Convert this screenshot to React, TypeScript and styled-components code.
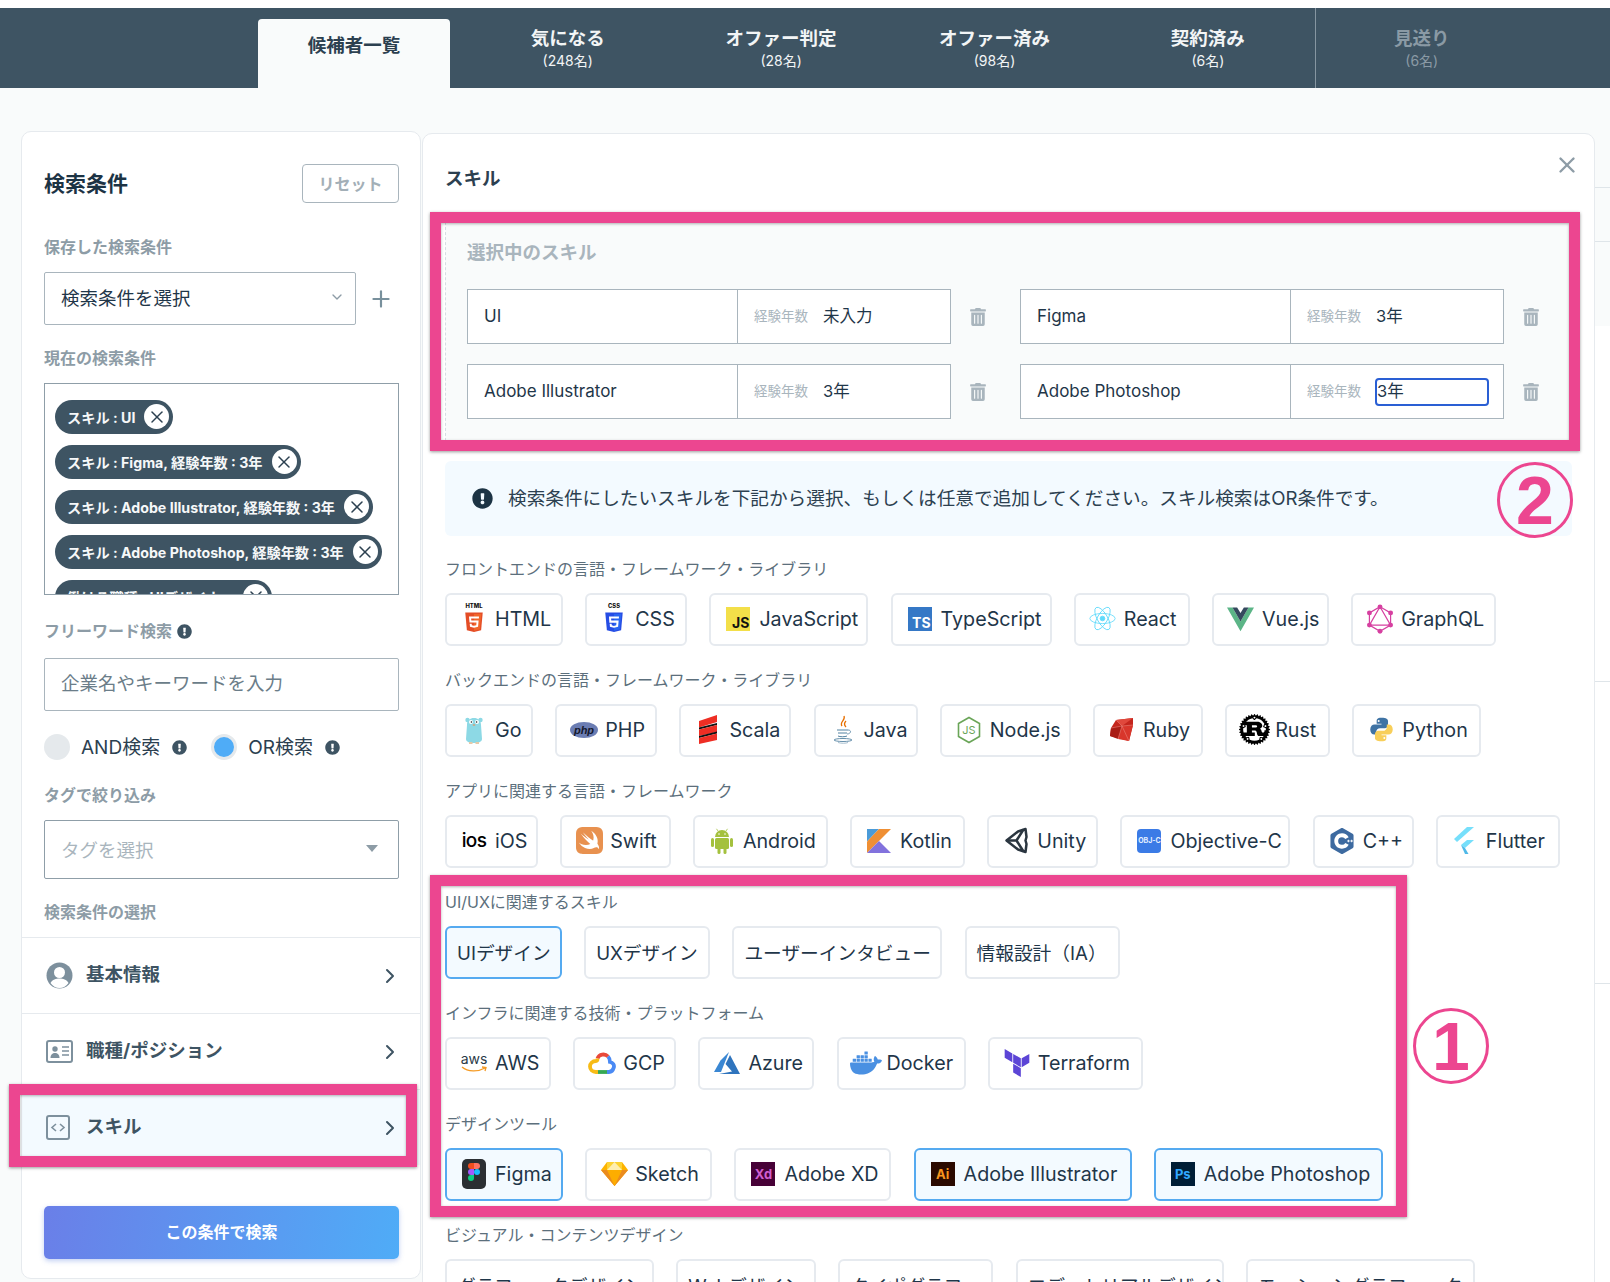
import * as React from 'react';
import styled, { createGlobalStyle } from 'styled-components';
import { ChevronDown, ChevronRight, Plus, X } from 'lucide-react';
import { FaExclamationCircle, FaTrashAlt } from 'react-icons/fa';
import { SiCplusplus, SiDocker, SiRust, SiSwift, SiTerraform } from 'react-icons/si';

const GlobalStyle = createGlobalStyle`
  html, body {
    margin: 0;
    padding: 0;
    background: #f9fbfb;
  }
  * {
    box-sizing: border-box;
  }
  body {
    font-family: Inter, 'Noto Sans CJK JP', sans-serif;
    color: #1f3649;
  }
`;

const Page = styled.div`
  position: relative;
  width: 1610px;
  height: 1282px;
  overflow: hidden;
  padding-top: 8px;
  background: linear-gradient(#fff 8px, #f9fbfb 8px);
`;

const Nav = styled.nav`
  display: flex;
  height: 80px;
  padding-left: 247px;
  background: #3e5463;
`;

const Tab = styled.div<{ $off?: boolean }>`
  width: 213.4px;
  display: flex;
  flex-direction: column;
  align-items: center;
  padding-top: 17px;
  color: ${p => (p.$off ? '#8a9aa5' : '#f2f5f6')};
  ${p => p.$off && 'border-left: 1px solid #8696a1;'}
`;

const ActiveTab = styled.div`
  width: 192px;
  margin: 11px 11px 0;
  display: flex;
  justify-content: center;
  padding-top: 12px;
  font-size: 18.5px;
  font-weight: 700;
  color: #2c4050;
  background: #f9fbfb;
  border-radius: 4px 4px 0 0;
`;

const TabName = styled.div`
  font-size: 18.5px;
  line-height: 26px;
  font-weight: 700;
`;

const TabCount = styled.div`
  font-size: 14px;
  line-height: 18px;
  margin-top: 1px;
`;

const Main = styled.div`
  display: flex;
  align-items: flex-start;
  padding: 43px 0 0 21px;
`;

const SideCard = styled.aside`
  width: 400px;
  height: 1148px;
  padding-top: 32px;
  background: #fff;
  border: 1px solid #e6eaee;
  border-radius: 10px;
`;

const Inset = styled.div`
  padding: 0 21px 0 22px;
`;

const SideHead = styled.div`
  display: flex;
  justify-content: space-between;
  align-items: center;
  height: 39px;
`;

const SideTitle = styled.h2`
  margin: 0 0 4px;
  font-size: 21px;
  font-weight: 700;
  color: #1c3344;
`;

const ResetButton = styled.button`
  width: 97px;
  height: 39px;
  padding: 0 0 2px;
  background: #fff;
  border: 1px solid #a9b5bd;
  border-radius: 4px;
  font: 700 16px Inter, 'Noto Sans CJK JP', sans-serif;
  color: #a3afb7;
`;

const FieldLabel = styled.div<{ $top: number; $bottom?: number }>`
  display: flex;
  align-items: center;
  gap: 5px;
  margin-top: ${p => p.$top - 1}px;
  margin-bottom: ${p => (p.$bottom ?? 12) + 1}px;
  font-size: 16px;
  line-height: 24px;
  font-weight: 700;
  color: #8d9ca6;
`;

const SelectRow = styled.div`
  display: flex;
  align-items: center;
  justify-content: space-between;
  color: #78909c;
`;

const SelectBox = styled.div`
  flex: 0 0 312px;
  height: 53px;
  display: flex;
  align-items: center;
  justify-content: space-between;
  padding: 0 10px 3px 16px;
  font-size: 18.5px;
  color: #1f3649;
  background: #fff;
  border: 1px solid #a9b5bd;
  border-radius: 2px;
`;

const AddIcon = styled(Plus)`
  margin-right: 5px;
`;

const ChipsBox = styled.div`
  height: 212px;
  overflow: hidden;
  padding: 16px 10px;
  display: flex;
  flex-direction: column;
  align-items: flex-start;
  gap: 11.5px;
  background: #fff;
  border: 1px solid #8f9ea8;
`;

const FilterChip = styled.div`
  flex: none;
  height: 33.5px;
  display: flex;
  align-items: center;
  gap: 9px;
  padding: 0 4px 0 12px;
  font-size: 14.2px;
  font-weight: 700;
  white-space: nowrap;
  color: #f6f8f9;
  background: #3e5463;
  border-radius: 17px;
`;

const ChipClose = styled.span`
  width: 25px;
  height: 25px;
  display: flex;
  align-items: center;
  justify-content: center;
  color: #2c4050;
  background: #fff;
  border-radius: 50%;
`;

const KeywordInput = styled.input`
  display: block;
  width: 100%;
  height: 53px;
  padding: 0 16px 3px;
  font: 18.5px Inter, 'Noto Sans CJK JP', sans-serif;
  background: #fff;
  border: 1px solid #a9b5bd;
  border-radius: 2px;
  outline: none;
  &::placeholder {
    color: #6b7d89;
  }
`;

const RadioRow = styled.div`
  display: flex;
  align-items: center;
  height: 26px;
  margin-top: 23px;
  font-size: 19px;
  color: #2c4050;
`;

const RadioText = styled.span`
  padding-bottom: 3px;
`;

const Radio = styled.span<{ $on?: boolean }>`
  width: 26px;
  height: 26px;
  margin-left: ${p => (p.$on ? 24 : 0)}px;
  margin-right: ${p => (p.$on ? 11 : 11)}px;
  border-radius: 50%;
  background: ${p => (p.$on ? '#4facf7' : '#e5e9ec')};
  ${p => p.$on && 'border: 3px solid #e5e9ec;'}
`;

const InfoDot = styled(FaExclamationCircle)<{ $gap?: number }>`
  flex: none;
  margin-left: ${p => p.$gap ?? 12}px;
  color: #3e5463;
`;

const TagSelect = styled.div`
  height: 59px;
  display: flex;
  align-items: center;
  justify-content: space-between;
  padding: 0 20px 2px 16px;
  font-size: 18.5px;
  color: #a9b5bd;
  background: #fff;
  border: 1px solid #8f9ea8;
  border-radius: 2px;
`;

const Caret = styled.span`
  width: 0;
  height: 0;
  border-left: 6px solid transparent;
  border-right: 6px solid transparent;
  border-top: 7px solid #8d9ca6;
`;

const MenuItem = styled.div<{ $on?: boolean; $h: number }>`
  height: ${p => p.$h}px;
  display: flex;
  align-items: center;
  padding: 0 18px 0 24px;
  font-size: 18.5px;
  font-weight: 700;
  color: #3e5463;
  background: ${p => (p.$on ? '#f3faff' : '#fff')};
  border-top: 1px solid #e6eaee;
`;

const MenuLabel = styled.span<{ $gap?: number }>`
  flex: 1;
  margin-left: ${p => p.$gap ?? 13}px;
  padding-bottom: 5px;
`;

const SearchButton = styled.button`
  display: block;
  width: 100%;
  height: 53px;
  margin-top: 41px;
  padding: 0 0 3px;
  background: linear-gradient(100deg, #6a7fe8, #4facf7);
  border: none;
  border-radius: 5px;
  box-shadow: 0 2px 5px rgba(79, 120, 220, 0.35);
  font: 700 16px Inter, 'Noto Sans CJK JP', sans-serif;
  color: #fff;
`;

const ContentCard = styled.section`
  flex: none;
  width: 1173px;
  height: 1160px;
  margin: 2px 0 0 1px;
  padding: 23px 22px 0;
  background: #fff;
  border: 1px solid #e6eaee;
  border-radius: 10px 10px 0 0;
`;

const ContentHead = styled.div`
  display: flex;
  justify-content: space-between;
  height: 65px;
`;

const ContentTitle = styled.h3`
  margin: 7px 0 0;
  font-size: 18.5px;
  line-height: 28px;
  font-weight: 700;
  color: #2c4050;
`;

const CloseIcon = styled(X)`
  margin: -5px -8px 0 0;
  color: #8d9ca6;
`;

const SelectedPanel = styled.div`
  height: 224px;
  width: 1127px;
  padding: 16px 0 0 21px;
  background: #f9fbfb;
  border: 1px dashed #d6dde2;
`;

const PanelTitle = styled.div`
  font-size: 18.5px;
  line-height: 26px;
  font-weight: 700;
  color: #a9b5bd;
  margin-bottom: 24px;
`;

const SelectedGrid = styled.div`
  display: grid;
  grid-template-columns: 538px 538px;
  column-gap: 15px;
  row-gap: 20px;
`;

const SelectedItem = styled.div`
  display: flex;
  align-items: center;
`;

const SkillGroup = styled.div`
  flex: 0 0 484px;
  height: 55px;
  display: flex;
  background: #fff;
  border: 1px solid #a9b5bd;
`;

const SkillName = styled.div`
  flex: 0 0 270px;
  display: flex;
  align-items: center;
  padding: 0 0 2px 16px;
  font-size: 17px;
  color: #1f3649;
  border-right: 1px solid #a9b5bd;
`;

const SkillYears = styled.div`
  flex: 1;
  display: flex;
  align-items: center;
  padding: 0 0 3px 16px;
  font-size: 16.5px;
  color: #1f3649;
`;

const YearsLabel = styled.span`
  width: 69px;
  font-size: 13.5px;
  color: #a9b5bd;
`;

const FocusBox = styled.div`
  width: 114px;
  height: 28px;
  line-height: 22px;
  margin: 3px 0 0 -1px;
  border: 2px solid #2a5fd4;
  border-radius: 4px;
`;

const TrashSlot = styled.div`
  flex: 0 0 54px;
  display: flex;
  justify-content: center;
  color: #a9b5bd;
`;

const Notice = styled.div`
  height: 75px;
  width: 1127px;
  margin-top: 15px;
  display: flex;
  align-items: center;
  gap: 15px;
  padding-left: 27px;
  font-size: 18.65px;
  color: #2c4050;
  background: #f3faff;
  border-radius: 6px;
`;

const NoticeText = styled.span`
  padding-bottom: 4px;
`;

const NoticeIcon = styled(FaExclamationCircle)`
  flex: none;
  color: #1c3344;
`;

const SkillSections = styled.div`
  margin-top: 21px;
`;

const SkillSection = styled.div`
  height: 111px;
`;

const SectionLabel = styled.div`
  font-size: 16px;
  line-height: 24px;
  color: #5c6f7c;
  margin-bottom: 12px;
  white-space: nowrap;
`;

const ChipRow = styled.div`
  display: flex;
  gap: 22.2px;
`;

const SkillChip = styled.div<{ $w: number; $on?: boolean; $plain?: boolean }>`
  flex: none;
  width: ${p => p.$w}px;
  height: 53px;
  display: flex;
  align-items: center;
  gap: 7px;
  padding: 0 0 2px ${p => (p.$plain ? 10 : 13)}px;
  font-size: ${p => (p.$plain ? 18.7 : 19.7)}px;
  white-space: nowrap;
  color: #1f3649;
  background: ${p => (p.$on ? '#f3faff' : '#fff')};
  border: 2px solid ${p => (p.$on ? '#55aaf0' : '#e6eaef')};
  border-radius: 6px;
`;

const IconSlot = styled.span`
  flex: 0 0 28px;
  min-width: 0;
  height: 32px;
  display: flex;
  align-items: center;
  justify-content: center;
  & > * {
    flex: none;
  }
`;

const Tile = styled.span<{ $bg: string; $fg: string; $size?: number; $end?: boolean; $round?: number }>`
  width: 24px;
  height: 24px;
  display: flex;
  align-items: ${p => (p.$end ? 'flex-end' : 'center')};
  justify-content: ${p => (p.$end ? 'flex-end' : 'center')};
  padding: ${p => (p.$end ? '0 1px 0 0' : '0')};
  font-size: ${p => p.$size ?? 13}px;
  line-height: ${p => (p.$end ? '16px' : '24px')};
  font-weight: 700;
  white-space: nowrap;
  color: ${p => p.$fg};
  background: ${p => p.$bg};
  border-radius: ${p => p.$round ?? 0}px;
`;

const LogoWord = styled.span`
  font-size: 19px;
  font-weight: 500;
  color: #000;
  letter-spacing: -0.6px;
`;

const AwsLogo = styled.span`
  display: flex;
  flex-direction: column;
  align-items: center;
  font-size: 14px;
  line-height: 14px;
  color: #2b3a48;
`;

const PinkBox = styled.div<{ $x: number; $y: number; $w: number; $h: number }>`
  position: absolute;
  left: ${p => p.$x}px;
  top: ${p => p.$y}px;
  width: ${p => p.$w}px;
  height: ${p => p.$h}px;
  border: 11px solid #ec4690;
  box-shadow: 0 1px 3px rgba(0, 0, 0, 0.4), inset 0 1px 3px rgba(0, 0, 0, 0.3);
  pointer-events: none;
`;

const StepMark = styled.div<{ $x: number; $y: number }>`
  position: absolute;
  left: ${p => p.$x}px;
  top: ${p => p.$y}px;
  width: 76px;
  height: 76px;
  display: flex;
  align-items: center;
  justify-content: center;
  font-family: 'Liberation Sans', sans-serif;
  font-size: 68px;
  font-weight: 700;
  color: #ec4690;
  border: 3px solid #ec4690;
  border-radius: 50%;
`;

const PageEdge = styled.div`
  flex: none;
  width: 15px;
  height: 1150px;
  margin-top: 56px;
  background: linear-gradient(#f9fbfb 139px, #fff 139px);
`;

const EdgeRow = styled.div<{ $h: number }>`
  height: ${p => p.$h}px;
  border-top: 1px solid #dfe5e9;
`;

const HtmlIcon = ({ css }: { css?: boolean }) => (
  <svg width="24" height="32" viewBox="0 0 32 44">
    <text x="16" y="7" textAnchor="middle" fontSize="8" fontWeight="800" fontFamily="Inter" fill="#111">{css ? 'CSS' : 'HTML'}</text>
    <g transform="translate(0 11)">
      <path d="M4 2l2.2 24.500L16 29l9.800-2.500L28 2z" fill={css ? '#264de4' : '#e44d26'} />
      <path d="M16 27l8-2 2-21H16z" fill={css ? '#2965f1' : '#f16529'} />
      {css ? (
        <path d="M9.100 7.700h13.800l-.25 2.700H12l.2 2.800h10.200l-.75 8.400L16 23.200l-5.600-1.500-.35-4h2.700l.2 2 3.050.8 3.050-.8.3-3.600H9.600z" fill="#fff" />
      ) : (
        <path d="M22.900 7.700H9.100l.75 8.200h9.550l-.3 3.700-3.100.8-3-.8-.2-2.200h-2.700l.4 4.300 5.500 1.500 5.600-1.500.75-8.500H12.300l-.25-2.800h10.600z" fill="#fff" />
      )}
    </g>
  </svg>
);

const ReactIcon = () => (
  <svg width="27" height="27" viewBox="0 0 32 32" fill="none" stroke="#61dafb" strokeWidth="1">
    <circle cx="16" cy="16" r="2.800" fill="#61dafb" />
    <ellipse cx="16" cy="16" rx="15" ry="6" />
    <ellipse cx="16" cy="16" rx="15" ry="6" transform="rotate(60 16 16)" />
    <ellipse cx="16" cy="16" rx="15" ry="6" transform="rotate(120 16 16)" />
  </svg>
);

const VueIcon = () => (
  <svg width="27" height="27" viewBox="0 0 32 32">
    <polygon points="0,3 16,31 32,3 25.500,3 16,19.600 6.500,3" fill="#5cb587" />
    <polygon points="6.500,3 16,19.600 25.500,3 20,3 16,9.500 12,3" fill="#35495e" />
  </svg>
);

const GraphqlIcon = () => {
  const pts = [[16, 3], [27.3, 9.5], [27.3, 22.5], [16, 29], [4.7, 22.5], [4.7, 9.5]];
  return (
    <svg width="30" height="32" viewBox="0 0 32 32" fill="none" stroke="#d63fa0" strokeWidth="1.300">
      <polygon points="16,3 27.300,9.500 27.300,22.500 16,29 4.700,22.500 4.700,9.500" />
      <polygon points="16,3 27.300,22.500 4.700,22.500" />
      {pts.map(([x, y]) => <circle key={`${x}-${y}`} cx={x} cy={y} r="2.600" fill="#d63fa0" stroke="none" />)}
    </svg>
  );
};

const GoIcon = () => (
  <svg width="20" height="28" viewBox="0 0 20 28">
    <circle cx="3.500" cy="4" r="2.200" fill="#8dd9e5" />
    <circle cx="16.500" cy="4" r="2.200" fill="#8dd9e5" />
    <path d="M3 9c0-5 3-7 7-7s7 2 7 7l1 14c0 3-4 4-8 4s-8-1-8-4z" fill="#8dd9e5" />
    <circle cx="7" cy="6" r="2" fill="#fff" />
    <circle cx="13" cy="6" r="2" fill="#fff" />
    <circle cx="7.400" cy="6" r="0.800" fill="#222" />
    <circle cx="12.600" cy="6" r="0.800" fill="#222" />
    <ellipse cx="10" cy="9" rx="1.400" ry="1" fill="#c9a88a" />
    <rect x="5" y="26" width="3.500" height="2" fill="#e6c9a8" />
    <rect x="11.500" y="26" width="3.500" height="2" fill="#e6c9a8" />
  </svg>
);

const PhpIcon = () => (
  <svg width="28" height="16" viewBox="0 0 28 16">
    <ellipse cx="14" cy="8" rx="14" ry="8" fill="#6b7db3" />
    <text x="14" y="11.500" textAnchor="middle" fontSize="11" fontStyle="italic" fontWeight="700" fontFamily="Liberation Sans" fill="#14182c">php</text>
  </svg>
);

const ScalaIcon = () => (
  <svg width="18" height="29" viewBox="0 0 18 29">
    <path d="M0 6l18-6v7L0 12.500z" fill="#ee2e24" />
    <path d="M0 12.500L18 8v2L0 14.500z" fill="#111" />
    <path d="M0 14.500L18 10v7L0 21z" fill="#ee2e24" />
    <path d="M0 21l18-4.500v2L0 23z" fill="#111" />
    <path d="M0 23l18-4.500V25L0 29z" fill="#ee2e24" />
  </svg>
);

const JavaIcon = () => (
  <svg width="20" height="29" viewBox="0 0 20 29" fill="none">
    <path d="M11 1c2 4-5 6-2 10M13 6c-2 2-2 4 0 6" stroke="#e76f00" strokeWidth="1.300" />
    <path d="M4 15h11M5 18h9M5 21c2 1 7 1 9 0" stroke="#5382a1" strokeWidth="1" />
    <path d="M15 15c4 0 3 4-1 4" stroke="#5382a1" strokeWidth="0.800" />
    <ellipse cx="10" cy="25" rx="9" ry="1.500" stroke="#5382a1" strokeWidth="0.900" />
    <path d="M5 27.500c3 1 8 1 10 0" stroke="#9db7c9" strokeWidth="0.900" />
  </svg>
);

const NodeIcon = () => (
  <svg width="24" height="28" viewBox="0 0 24 28">
    <polygon points="12,1.500 22.500,7.500 22.500,20.500 12,26.500 1.500,20.500 1.500,7.500" fill="none" stroke="#6aa558" strokeWidth="1.600" />
    <text x="12" y="18" textAnchor="middle" fontSize="11" fontFamily="Inter" fill="#6aa558">JS</text>
  </svg>
);

const RubyIcon = () => (
  <svg width="26" height="26" viewBox="0 0 26 26">
    <polygon points="7,3 24,1 24,8 20,24 1,19 2,11" fill="#c4261d" />
    <polygon points="7,3 13,9 24,1" fill="#e0483c" />
    <polygon points="2,11 13,9 9,22 1,19" fill="#a91c14" />
    <polygon points="13,9 24,8 20,24 9,22" fill="#d8362b" />
    <path d="M7 3l6 6 11-1M2 11l11-2-4 13M13 9l7 15" stroke="#ee8f87" strokeWidth="0.500" fill="none" />
  </svg>
);

const PythonIcon = () => (
  <svg width="27" height="27" viewBox="0 0 24 24">
    <path d="M12 1.500c-4.200 0-4.300 1.800-4.300 3v2.300H12v.7H5.900C3.700 7.500 2 9.200 2 12s1.500 4.500 3.600 4.500h1.700v-2.400c0-1.800 1.500-3.300 3.400-3.300h4.200c1.600 0 2.900-1.300 2.900-2.900V4.500c0-1.600-1.400-3-5.800-3z" fill="#3f73a4" />
    <path d="M12 22.500c4.200 0 4.300-1.800 4.300-3v-2.300H12v-.7h6.100c2.200 0 3.900-1.700 3.900-4.500s-1.500-4.500-3.600-4.500h-1.700v2.400c0 1.800-1.500 3.300-3.400 3.300H9.100c-1.600 0-2.900 1.300-2.900 2.900v3.400c0 1.600 1.400 3 5.800 3z" fill="#f8cf5a" />
    <circle cx="9.500" cy="4.400" r="0.900" fill="#fff" />
    <circle cx="14.500" cy="19.600" r="0.900" fill="#fff" />
  </svg>
);

const AndroidIcon = () => (
  <svg width="22" height="26" viewBox="0 0 22 26" fill="#a4c13e">
    <path d="M4 9a7 7 0 0 1 14 0z" />
    <rect x="4" y="10" width="14" height="11" rx="1.500" />
    <rect x="0" y="10" width="3" height="9" rx="1.500" />
    <rect x="19" y="10" width="3" height="9" rx="1.500" />
    <rect x="6.500" y="19" width="3" height="7" rx="1.500" />
    <rect x="12.500" y="19" width="3" height="7" rx="1.500" />
    <path d="M7 3L5.500 .8M15 3l1.500-2.200" stroke="#a4c13e" strokeWidth="0.800" />
    <circle cx="8" cy="6" r="0.800" fill="#fff" />
    <circle cx="14" cy="6" r="0.800" fill="#fff" />
  </svg>
);

const KotlinIcon = () => (
  <svg width="24" height="24" viewBox="0 0 24 24">
    <polygon points="0,0 12,0 0,12.500" fill="#4b9bd8" />
    <polygon points="12,0 24,0 0,24 0,12.500" fill="#ef8f34" />
    <polygon points="0,24 12,12 24,24" fill="#8272dd" />
  </svg>
);

const UnityIcon = () => (
  <svg width="24" height="27" viewBox="0 0 24 27" fill="none" stroke="#2b3640" strokeWidth="2.500" strokeLinejoin="round">
    <path d="M2.500 13.500L14 4.500l7.500-2.500 1 8-1 3.500 1 3.500-1 8-7.500-2.500z" />
    <path d="M2.500 13.500h10l7-11M12.500 13.500l7 11M12.500 13.500" />
  </svg>
);

const FlutterIcon = () => (
  <svg width="22" height="27" viewBox="0 0 22 27">
    <polygon points="13,0 20,0 3,15 0,12" fill="#76dffb" />
    <polygon points="13,13 20,13 11,21 7,18" fill="#76dffb" />
    <polygon points="7,18 11,21 14.500,27 11,27" fill="#4fb9e8" />
  </svg>
);

const GcpIcon = () => (
  <svg width="28" height="26" viewBox="0 0 28 26" fill="none" strokeWidth="3.800">
    <path d="M9.500 8.500C11 4 17 3.300 20 6.500" stroke="#e9493a" />
    <path d="M20 6.500c2 2 2 3.500 2 5.500 3 .5 4.500 3 3.800 5.500S23 22 21 22h-2" stroke="#4a8af4" />
    <path d="M19 22h-9" stroke="#35a853" />
    <path d="M10 22H8c-3.500 0-6-2.500-6-5.500s2.500-5.500 6-5.500c1 0 1.500 0 1.500-2.500" stroke="#f7bb16" />
  </svg>
);

const AzureIcon = () => (
  <svg width="26" height="24" viewBox="0 0 26 24">
    <polygon points="15,1 6.500,9.500 0,21 7,21" fill="#3a87d3" />
    <polygon points="16,4 26,23 5,23 18,20.500 11.500,13" fill="#2f74bd" />
  </svg>
);

const FigmaIcon = () => (
  <svg width="24" height="30" viewBox="0 0 24 30">
    <rect width="24" height="30" rx="5" fill="#2b2f33" />
    <path d="M12 4h-3a3 3 0 0 0 0 6h3z" fill="#f24e1e" />
    <path d="M12 4h3a3 3 0 0 1 0 6h-3z" fill="#ff7262" />
    <path d="M12 10H9a3 3 0 0 0 0 6h3z" fill="#a259ff" />
    <circle cx="15" cy="13" r="3" fill="#1abcfe" />
    <path d="M9 16h3v3a3 3 0 1 1-3-3z" fill="#0acf83" />
  </svg>
);

const SketchIcon = () => (
  <svg width="27" height="25" viewBox="0 0 27 25">
    <polygon points="6,1 21,1 27,9 13.500,25 0,9" fill="#fdb300" />
    <polygon points="0,9 27,9 13.500,25" fill="#ea8b1f" />
    <polygon points="6,9 21,9 13.500,25" fill="#fdad00" />
    <polygon points="6,1 13.500,1 21,1 21,9 6,9" fill="#fdd231" />
    <polygon points="13.500,1 21,9 6,9" fill="#feeeb0" />
  </svg>
);

const AwsIcon = () => (
  <AwsLogo>
    aws
    <svg width="27" height="7" viewBox="0 0 27 7" fill="none">
      <path d="M1 1c6 5 16 5 23 1M21 1l4 .5-1 3.500" stroke="#f59a23" strokeWidth="1.300" />
    </svg>
  </AwsLogo>
);

type Skill = { name: string; w: number; icon?: React.ReactNode; on?: boolean };

const sections: { label: string; chips: Skill[] }[] = [
  {
    label: 'フロントエンドの言語・フレームワーク・ライブラリ',
    chips: [
      { name: 'HTML', w: 118, icon: <HtmlIcon /> },
      { name: 'CSS', w: 102, icon: <HtmlIcon css /> },
      { name: 'JavaScript', w: 159, icon: <Tile $bg="#f3df49" $fg="#111" $size={14} $end>JS</Tile> },
      { name: 'TypeScript', w: 161, icon: <Tile $bg="#3578c6" $fg="#fff" $size={14} $end>TS</Tile> },
      { name: 'React', w: 116, icon: <ReactIcon /> },
      { name: 'Vue.js', w: 117, icon: <VueIcon /> },
      { name: 'GraphQL', w: 145, icon: <GraphqlIcon /> },
    ],
  },
  {
    label: 'バックエンドの言語・フレームワーク・ライブラリ',
    chips: [
      { name: 'Go', w: 88, icon: <GoIcon /> },
      { name: 'PHP', w: 102, icon: <PhpIcon /> },
      { name: 'Scala', w: 112, icon: <ScalaIcon /> },
      { name: 'Java', w: 104, icon: <JavaIcon /> },
      { name: 'Node.js', w: 131, icon: <NodeIcon /> },
      { name: 'Ruby', w: 110, icon: <RubyIcon /> },
      { name: 'Rust', w: 105, icon: <SiRust size={31} color="#000" /> },
      { name: 'Python', w: 129, icon: <PythonIcon /> },
    ],
  },
  {
    label: 'アプリに関連する言語・フレームワーク',
    chips: [
      { name: 'iOS', w: 93, icon: <LogoWord>ios</LogoWord> },
      { name: 'Swift', w: 110.5, icon: <SiSwift size={27} color="#e8914f" /> },
      { name: 'Android', w: 135, icon: <AndroidIcon /> },
      { name: 'Kotlin', w: 115, icon: <KotlinIcon /> },
      { name: 'Unity', w: 111, icon: <UnityIcon /> },
      { name: 'Objective-C', w: 170, icon: <Tile $bg="#3b7be6" $fg="#e6f0ff" $size={7} $round={4}>OBJ-C</Tile> },
      { name: 'C++', w: 101, icon: <SiCplusplus size={26} color="#3d6aa0" /> },
      { name: 'Flutter', w: 124, icon: <FlutterIcon /> },
    ],
  },
  {
    label: 'UI/UXに関連するスキル',
    chips: [
      { name: 'UIデザイン', w: 117, on: true },
      { name: 'UXデザイン', w: 126 },
      { name: 'ユーザーインタビュー', w: 210 },
      { name: '情報設計（IA）', w: 155 },
    ],
  },
  {
    label: 'インフラに関連する技術・プラットフォーム',
    chips: [
      { name: 'AWS', w: 106, icon: <AwsIcon /> },
      { name: 'GCP', w: 103, icon: <GcpIcon /> },
      { name: 'Azure', w: 116, icon: <AzureIcon /> },
      { name: 'Docker', w: 129, icon: <SiDocker size={32} color="#4a90e2" /> },
      { name: 'Terraform', w: 155, icon: <SiTerraform size={28} color="#5c45d6" /> },
    ],
  },
  {
    label: 'デザインツール',
    chips: [
      { name: 'Figma', w: 118, icon: <FigmaIcon />, on: true },
      { name: 'Sketch', w: 127, icon: <SketchIcon /> },
      { name: 'Adobe XD', w: 157, icon: <Tile $bg="#470137" $fg="#d05fd0">Xd</Tile> },
      { name: 'Adobe Illustrator', w: 218, icon: <Tile $bg="#2b0a00" $fg="#f7941d">Ai</Tile>, on: true },
      { name: 'Adobe Photoshop', w: 229, icon: <Tile $bg="#001e36" $fg="#31a8ff">Ps</Tile>, on: true },
    ],
  },
  {
    label: 'ビジュアル・コンテンツデザイン',
    chips: [
      { name: 'グラフィックデザイン', w: 209 },
      { name: 'Webデザイン', w: 140 },
      { name: 'タイポグラフィ', w: 155 },
      { name: 'エディトリアルデザイン', w: 208 },
      { name: 'モーショングラフィック', w: 229 },
    ],
  },
];

const filterChips = [
  'スキル : UI',
  'スキル : Figma, 経験年数 : 3年',
  'スキル : Adobe Illustrator, 経験年数 : 3年',
  'スキル : Adobe Photoshop, 経験年数 : 3年',
  '働ける職種 : UIデザイナー',
];

const tabs = [
  { name: '気になる', count: '(248名)' },
  { name: 'オファー判定', count: '(28名)' },
  { name: 'オファー済み', count: '(98名)' },
  { name: '契約済み', count: '(6名)' },
];

const selected = [
  { name: 'UI', years: '未入力' },
  { name: 'Figma', years: '3年' },
  { name: 'Adobe Illustrator', years: '3年' },
  { name: 'Adobe Photoshop', years: '3年', focus: true },
];

const PersonIcon = () => (
  <svg width="27" height="27" viewBox="0 0 27 27">
    <circle cx="13.500" cy="13.500" r="13" fill="#7d909d" />
    <circle cx="13.500" cy="10.500" r="5.500" fill="#fff" />
    <path d="M4.500 21c2-3.500 5.500-4.500 9-4.500s7 1 9 4.500c-2 3-5.500 5-9 5s-7-2-9-5z" fill="#fff" />
  </svg>
);

const CardIcon = () => (
  <svg width="27" height="23" viewBox="0 0 27 23">
    <rect x="1" y="1" width="25" height="21" rx="2" fill="#fff" stroke="#7d909d" strokeWidth="2" />
    <circle cx="9" cy="9" r="2.700" fill="#7d909d" />
    <path d="M4.500 18c0-3.500 2-5 4.500-5s4.500 1.500 4.500 5z" fill="#7d909d" />
    <path d="M16 7h7M16 11h7M16 15h7" stroke="#7d909d" strokeWidth="1.500" />
  </svg>
);

const CodeIcon = () => (
  <svg width="24" height="25" viewBox="0 0 24 25" fill="none" stroke="#7d909d">
    <rect x="1" y="1" width="22" height="23" rx="2" strokeWidth="2" />
    <path d="M10 9l-4 3.500 4 3.500M14 9l4 3.500-4 3.500" strokeWidth="1.600" />
  </svg>
);

export default function App() {
  return (
    <Page>
      <GlobalStyle />
      <Nav>
        <ActiveTab>候補者一覧</ActiveTab>
        {tabs.map(t => (
          <Tab key={t.name}>
            <TabName>{t.name}</TabName>
            <TabCount>{t.count}</TabCount>
          </Tab>
        ))}
        <Tab $off>
          <TabName>見送り</TabName>
          <TabCount>(6名)</TabCount>
        </Tab>
      </Nav>

      <Main>
        <SideCard>
          <Inset>
            <SideHead>
              <SideTitle>検索条件</SideTitle>
              <ResetButton>リセット</ResetButton>
            </SideHead>

            <FieldLabel $top={33}>保存した検索条件</FieldLabel>
            <SelectRow>
              <SelectBox>
                検索条件を選択
                <ChevronDown size={16} color="#8d9ca6" />
              </SelectBox>
              <AddIcon size={26} strokeWidth={2} />
            </SelectRow>

            <FieldLabel $top={22}>現在の検索条件</FieldLabel>
            <ChipsBox>
              {filterChips.map(c => (
                <FilterChip key={c}>
                  {c}
                  <ChipClose><X size={20} strokeWidth={1.8} /></ChipClose>
                </FilterChip>
              ))}
            </ChipsBox>

            <FieldLabel $top={25} $bottom={14}>
              フリーワード検索
              <InfoDot size={15} $gap={0} />
            </FieldLabel>
            <KeywordInput readOnly placeholder="企業名やキーワードを入力" />

            <RadioRow>
              <Radio />
              <RadioText>AND検索</RadioText>
              <InfoDot size={15} />
              <Radio $on />
              <RadioText>OR検索</RadioText>
              <InfoDot size={15} />
            </RadioRow>

            <FieldLabel $top={24}>タグで絞り込み</FieldLabel>
            <TagSelect>
              タグを選択
              <Caret />
            </TagSelect>

            <FieldLabel $top={22}>検索条件の選択</FieldLabel>
          </Inset>

          <MenuItem $h={76}>
            <PersonIcon />
            <MenuLabel>基本情報</MenuLabel>
            <ChevronRight size={24} strokeWidth={2} />
          </MenuItem>
          <MenuItem $h={76}>
            <CardIcon />
            <MenuLabel>職種/ポジション</MenuLabel>
            <ChevronRight size={24} strokeWidth={2} />
          </MenuItem>
          <MenuItem $h={76} $on>
            <CodeIcon />
            <MenuLabel $gap={16}>スキル</MenuLabel>
            <ChevronRight size={24} strokeWidth={2} />
          </MenuItem>

          <Inset>
            <SearchButton>この条件で検索</SearchButton>
          </Inset>
        </SideCard>

        <ContentCard>
          <ContentHead>
            <ContentTitle>スキル</ContentTitle>
            <CloseIcon size={26} strokeWidth={2.2} />
          </ContentHead>

          <SelectedPanel>
            <PanelTitle>選択中のスキル</PanelTitle>
            <SelectedGrid>
              {selected.map(s => (
                <SelectedItem key={s.name}>
                  <SkillGroup>
                    <SkillName>{s.name}</SkillName>
                    <SkillYears>
                      <YearsLabel>経験年数</YearsLabel>
                      {s.focus ? <FocusBox>{s.years}</FocusBox> : s.years}
                    </SkillYears>
                  </SkillGroup>
                  <TrashSlot><FaTrashAlt size={18} /></TrashSlot>
                </SelectedItem>
              ))}
            </SelectedGrid>
          </SelectedPanel>

          <Notice>
            <NoticeIcon size={21} />
            <NoticeText>検索条件にしたいスキルを下記から選択、もしくは任意で追加してください。スキル検索はOR条件です。</NoticeText>
          </Notice>

          <SkillSections>
            {sections.map(sec => (
              <SkillSection key={sec.label}>
                <SectionLabel>{sec.label}</SectionLabel>
                <ChipRow>
                  {sec.chips.map(c => (
                    <SkillChip key={c.name} $w={c.w} $on={c.on} $plain={!c.icon}>
                      {c.icon && <IconSlot>{c.icon}</IconSlot>}
                      {c.name}
                    </SkillChip>
                  ))}
                </ChipRow>
              </SkillSection>
            ))}
          </SkillSections>
        </ContentCard>

        <PageEdge>
          <EdgeRow $h={54} />
          <EdgeRow $h={440} />
          <EdgeRow $h={302} />
          <EdgeRow $h={300} />
        </PageEdge>
      </Main>

      <PinkBox $x={9} $y={1084} $w={408} $h={83} />
      <PinkBox $x={430} $y={212} $w={1150} $h={239} />
      <PinkBox $x={430} $y={875} $w={977} $h={342} />
      <StepMark $x={1497} $y={462}>2</StepMark>
      <StepMark $x={1413} $y={1008}>1</StepMark>
    </Page>
  );
}
